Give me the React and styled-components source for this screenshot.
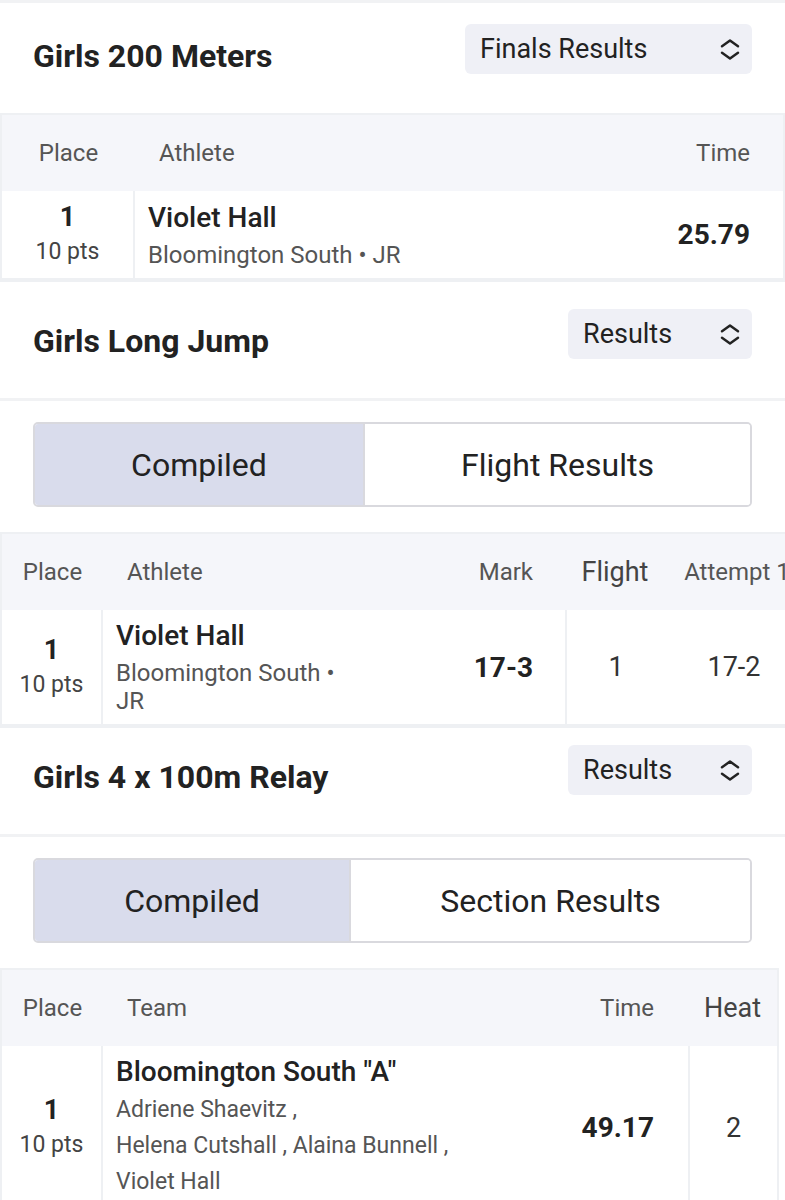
import styled, { createGlobalStyle } from 'styled-components';

const GlobalStyle = createGlobalStyle`
  html, body {
    margin: 0;
    padding: 0;
    background: #fff;
    overflow-x: hidden;
  }
  body {
    font-family: Roboto, "Noto Sans", Arial, sans-serif;
    color: #222;
  }
`;

const Page = styled.main`
  width: 785px;
  border-top: 3px solid #f1f2f4;
`;

const EventHead = styled.header`
  display: flex;
  justify-content: space-between;
  align-items: flex-start;
  padding: ${(p) => p.$top}px 33px 38px;
  border-bottom: ${(p) => (p.$rule ? '3px solid #f1f2f4' : 'none')};
`;

const EventTitle = styled.h2`
  margin: 13px 0 0;
  font-size: 32px;
  line-height: 38px;
  font-weight: 700;
  color: #222;
`;

const SelectBox = styled.div`
  width: ${(p) => p.$width}px;
  height: 50px;
  box-sizing: border-box;
  display: flex;
  align-items: center;
  justify-content: space-between;
  padding: 0 12px 0 15px;
  background: #eff0f6;
  border-radius: 6px;
  font-size: 27px;
  color: #222;
`;

const Segments = styled.div`
  display: flex;
  height: 85px;
  box-sizing: border-box;
  margin: 21px 33px 25px;
  border: 2px solid #d9d9de;
  border-radius: 5px;
  overflow: hidden;
`;

const Segment = styled.div`
  flex: 1 1 auto;
  display: flex;
  align-items: center;
  justify-content: center;
  font-size: 32px;
  color: #222;
  background: ${(p) => (p.$active ? '#d9dcec' : '#fff')};
  & + & {
    border-left: 2px solid #d9d9de;
  }
`;

const TableFrame = styled.div`
  width: ${(p) => p.$width}px;
  border: 2px solid #eef0f3;
  border-bottom-width: 4px;
  box-sizing: border-box;
`;

const Table = styled.table`
  width: 100%;
  table-layout: fixed;
  border-collapse: separate;
  border-spacing: 0;
`;

const Col = styled.col`
  width: ${(p) => (p.$w ? `${p.$w}px` : 'auto')};
`;

const HeadRow = styled.tr`
  background: #f5f6fa;
`;

const Th = styled.th`
  height: 76px;
  padding: 0 ${(p) => p.$pr ?? 0}px 0 ${(p) => p.$pl ?? 0}px;
  font-size: ${(p) => (p.$big ? 27 : 24)}px;
  font-weight: 400;
  color: ${(p) => (p.$big ? '#444' : '#555')};
  text-align: ${(p) => p.$align || 'left'};
  white-space: nowrap;
`;

const Td = styled.td`
  padding: 9px ${(p) => p.$pr ?? 13}px 9px ${(p) => p.$pl ?? 13}px;
  vertical-align: middle;
  text-align: ${(p) => p.$align || 'left'};
  border-left: ${(p) => (p.$edge ? '2px solid #eef0f3' : 'none')};
  border-right: ${(p) => (p.$split ? '2px solid #eef0f3' : 'none')};
  white-space: ${(p) => (p.$nowrap ? 'nowrap' : 'normal')};
`;

const PlaceNum = styled.div`
  font-size: 27px;
  line-height: 34px;
  font-weight: 700;
  color: #222;
`;

const Points = styled.div`
  margin-top: 1px;
  font-size: 23px;
  line-height: 34px;
  color: #444;
`;

const Name = styled.div`
  font-size: 28px;
  line-height: 34px;
  font-weight: 500;
  color: #222;
`;

const Sub = styled.div`
  margin-top: 6px;
  font-size: 24px;
  line-height: 28px;
  color: #555;
`;

const Members = styled.div`
  max-width: 342px;
  margin-top: 3px;
  font-size: 23px;
  line-height: 36px;
  color: #555;
`;

const Member = styled.span`
  white-space: nowrap;
`;

const Mark = styled.span`
  font-size: 28px;
  font-weight: 700;
  color: #222;
`;

const Value = styled.span`
  font-size: 27px;
  color: #333;
`;

function Chevrons() {
  return (
    <svg width="20" height="21" viewBox="0 0 20 21" fill="none" stroke="#222" strokeWidth="2.5" strokeLinecap="round" strokeLinejoin="round">
      <path d="M2 7.2 L10 1.6 L18 7.2" />
      <path d="M2 13.8 L10 19.4 L18 13.8" />
    </svg>
  );
}

function Header({ title, option, width, top, rule }) {
  return (
    <EventHead $top={top} $rule={rule}>
      <EventTitle>{title}</EventTitle>
      <SelectBox $width={width}>
        {option}
        <Chevrons />
      </SelectBox>
    </EventHead>
  );
}

function Switch({ second }) {
  return (
    <Segments>
      <Segment $active>Compiled</Segment>
      <Segment>{second}</Segment>
    </Segments>
  );
}

function Place() {
  return (
    <Td $align="center" $pl={0} $pr={0} $split>
      <PlaceNum>1</PlaceNum>
      <Points>10 pts</Points>
    </Td>
  );
}

export default function App() {
  return (
    <Page>
      <GlobalStyle />

      <section>
        <Header title="Girls 200 Meters" option="Finals Results" width={287} top={21} />
        <TableFrame $width={785}>
          <Table>
            <colgroup>
              <Col $w={133} />
              <Col />
              <Col $w={200} />
            </colgroup>
            <thead>
              <HeadRow>
                <Th $align="center">Place</Th>
                <Th $pl={24}>Athlete</Th>
                <Th $align="right" $pr={33}>Time</Th>
              </HeadRow>
            </thead>
            <tbody>
              <tr>
                <Place />
                <Td>
                  <Name>Violet Hall</Name>
                  <Sub>Bloomington South • JR</Sub>
                </Td>
                <Td $align="right" $pr={33}>
                  <Mark>25.79</Mark>
                </Td>
              </tr>
            </tbody>
          </Table>
        </TableFrame>
      </section>

      <section>
        <Header title="Girls Long Jump" option="Results" width={184} top={27} rule />
        <Switch second="Flight Results" />
        <TableFrame $width={805}>
          <Table>
            <colgroup>
              <Col $w={101} />
              <Col $w={262} />
              <Col $w={200} />
              <Col $w={100} />
              <Col />
            </colgroup>
            <thead>
              <HeadRow>
                <Th $align="center">Place</Th>
                <Th $pl={24}>Athlete</Th>
                <Th $align="right" $pr={32}>Mark</Th>
                <Th $align="center" $big>Flight</Th>
                <Th $align="center" $pl={6}>Attempt 1</Th>
              </HeadRow>
            </thead>
            <tbody>
              <tr>
                <Place />
                <Td>
                  <Name>Violet Hall</Name>
                  <Sub>Bloomington South • JR</Sub>
                </Td>
                <Td $align="right" $pr={32}>
                  <Mark>17-3</Mark>
                </Td>
                <Td $align="center" $edge>
                  <Value>1</Value>
                </Td>
                <Td $align="center" $nowrap>
                  <Value>17-2</Value>
                </Td>
              </tr>
            </tbody>
          </Table>
        </TableFrame>
      </section>

      <section>
        <Header title="Girls 4 x 100m Relay" option="Results" width={184} top={17} rule />
        <Switch second="Section Results" />
        <TableFrame $width={779}>
          <Table>
            <colgroup>
              <Col $w={101} />
              <Col $w={366} />
              <Col $w={219} />
              <Col />
            </colgroup>
            <thead>
              <HeadRow>
                <Th $align="center">Place</Th>
                <Th $pl={24}>Team</Th>
                <Th $align="right" $pr={34}>Time</Th>
                <Th $align="center" $big>Heat</Th>
              </HeadRow>
            </thead>
            <tbody>
              <tr>
                <Place />
                <Td>
                  <Name>Bloomington South "A"</Name>
                  <Members>
                    <Member>Adriene Shaevitz ,</Member> <Member>Helena Cutshall ,</Member>{' '}
                    <Member>Alaina Bunnell ,</Member> <Member>Violet Hall</Member>
                  </Members>
                </Td>
                <Td $align="right" $pr={34}>
                  <Mark>49.17</Mark>
                </Td>
                <Td $align="center" $edge>
                  <Value>2</Value>
                </Td>
              </tr>
            </tbody>
          </Table>
        </TableFrame>
      </section>
    </Page>
  );
}
